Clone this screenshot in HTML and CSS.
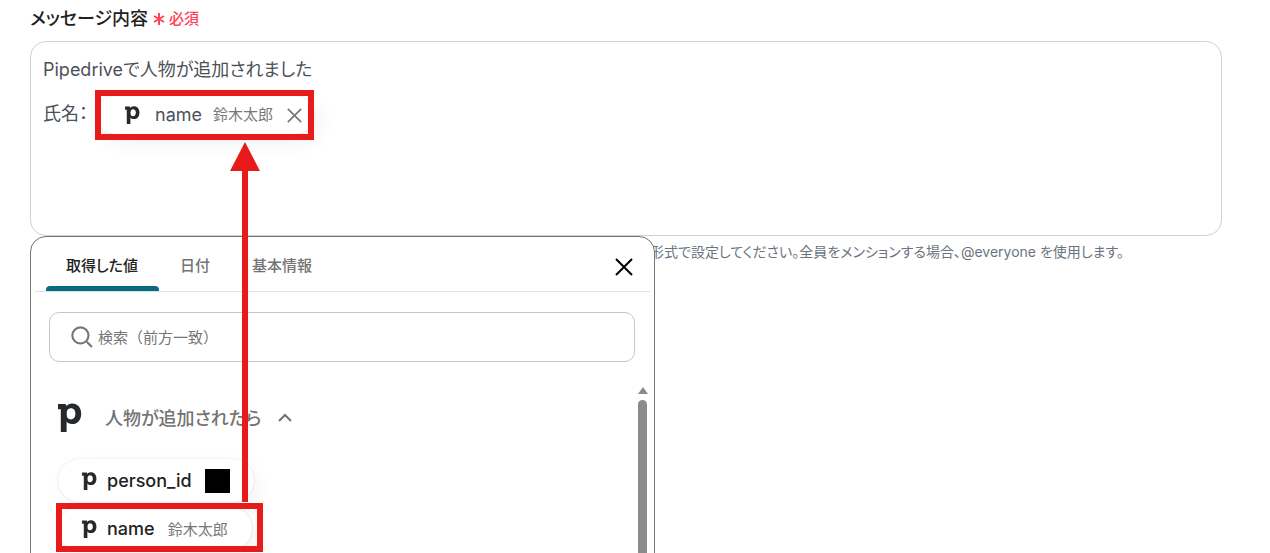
FILE: index.html
```html
<!DOCTYPE html>
<html lang="ja">
<head>
<meta charset="utf-8">
<title>メッセージ内容</title>
<link rel="stylesheet" href="styles.css">
</head>
<body>
<svg class="defs" aria-hidden="true">
  <symbol id="logo" viewBox="0 0 24 29">
    <path d="M0 1h7.5L8.6 3v26H2.8V6.2H0z" fill="#26292c"/>
    <path d="M14.3 .4c5.3 0 8.9 4.2 8.9 10.3s-3.7 10.4-9 10.4c-3.2 0-5.2-1.400-6.200-3V3.600C9 1.800 11.100.4 14.300.4zM13 5.300c-2.700 0-4.600 2.100-4.600 5.500 0 3.900 2 5.600 4.500 5.600 2.400 0 4.500-1.900 4.500-5.600 0-3.300-1.700-5.500-4.400-5.500z" fill="#26292c" fill-rule="evenodd"/>
  </symbol>
  <symbol id="cross" viewBox="0 0 18 18">
    <path d="M1 1l16 16M17 1L1 17" fill="none" stroke="currentColor" stroke-width="2"/>
  </symbol>
</svg>
<main class="page">
  <div class="label-row">
    <span class="label" id="message-label">メッセージ内容</span>
    <span class="required"><svg class="star" viewBox="0 0 12 12"><path d="M6 0v12M1 3l10 6M11 3L1 9" stroke="currentColor" stroke-width="2"/></svg>必須</span>
  </div>
  <div class="field">
    <div class="editor" role="textbox" aria-multiline="true" aria-labelledby="message-label" contenteditable="true" spellcheck="false">
      <p class="line">Pipedriveで人物が追加されました</p>
      <div class="line token-line">
        <span>氏名：</span>
        <span class="token" contenteditable="false">
          <svg class="logo-small"><use href="#logo"/></svg>
          <span class="token-name">name</span>
          <span class="sample">鈴木太郎</span>
          <button class="remove" type="button" aria-label="削除"><svg><use href="#cross"/></svg></button>
        </span>
      </div>
    </div>
    <p class="help">形式で設定してください。全員をメンションする場合、@everyone を使用します。</p>
    <section class="popup">
      <header class="tabs">
        <button class="tab selected" type="button">取得した値</button>
        <button class="tab" type="button">日付</button>
        <button class="tab" type="button">基本情報</button>
        <button class="close" type="button" aria-label="閉じる"><svg><use href="#cross"/></svg></button>
      </header>
      <label class="search">
        <svg viewBox="0 0 21 21"><circle cx="9" cy="9" r="7.7"/><path d="M15 15l5 5"/></svg>
        <input type="text" placeholder="検索（前方一致）" aria-label="検索（前方一致）">
      </label>
      <div class="results">
        <button class="group" type="button">
          <svg class="logo-large"><use href="#logo"/></svg>
          <span>人物が追加されたら</span>
          <svg class="chevron" viewBox="0 0 14 9"><path d="M1 8l6-6 6 6"/></svg>
        </button>
        <button class="value" type="button">
          <svg class="logo-small"><use href="#logo"/></svg>
          <span class="key">person_id</span>
          <span class="mask"></span>
        </button>
        <button class="value" type="button">
          <svg class="logo-small"><use href="#logo"/></svg>
          <span class="key">name</span>
          <span class="sample">鈴木太郎</span>
        </button>
        <div class="scroll"><span class="scroll-up"></span><span class="scroll-thumb"></span></div>
      </div>
    </section>
  </div>
</main>
<svg class="marks" aria-hidden="true">
  <rect x="98" y="93" width="213" height="44"/>
  <rect x="59" y="506" width="201" height="43"/>
  <path d="M245 502V168"/>
  <polygon points="245,142 230,171 260,171"/>
</svg>
</body>
</html>
```
FILE: styles.css
```css
* { box-sizing: border-box; }
html, body { height: 100%; }
body {
  margin: 0;
  overflow: hidden;
  background: #fff;
  color: #222;
  font-family: Inter, "Noto Sans CJK JP", sans-serif;
  font-feature-settings: "palt";
}
button, input { font: inherit; font-feature-settings: inherit; color: inherit; background: none; border: 0; margin: 0; padding: 0; }
p { margin: 0; }
svg { display: block; flex: none; }
.defs { position: absolute; width: 0; height: 0; }
.page { height: 100%; padding: 5px 48px 0 30px; display: flex; flex-direction: column; }
.label-row { display: flex; align-items: center; gap: 5px; height: 24px; }
.label { font-size: 18px; font-weight: 500; }
.required { display: flex; align-items: center; gap: 4px; color: #ff4458; font-size: 15px; font-weight: 500; }
.star { width: 12px; height: 12px; margin-top: 4px; }
.field { position: relative; flex: 1; margin-top: 12px; }
.editor {
  height: 195px;
  padding: 12px;
  border: 1px solid #ced0d7;
  border-radius: 16px;
  color: #4b5159;
  font-size: 18px;
  line-height: 32px;
  outline: none;
}
.token-line { display: flex; align-items: center; gap: 8px; margin-top: 8px; height: 40px; }
.token {
  display: flex;
  align-items: center;
  height: 38px;
  margin-top: 2px;
  padding: 0 12px 0 29px;
  border-radius: 20px;
  box-shadow: 0 0 2px #0002, 6px 8px 20px #00000010;
}
.logo-small { width: 15px; height: 18px; }
.token-name { margin: 0 11px 0 15px; }
.sample { color: #777; font-size: 15px; }
.remove { margin-left: 14px; color: #777; }
.remove svg { width: 15px; height: 15px; }
.help { margin: 4px 0 0 620px; color: #6b747e; font-size: 14px; line-height: 24px; white-space: nowrap; }
.popup {
  position: absolute;
  top: 195px;
  left: 0;
  bottom: -16px;
  width: 625px;
  overflow: hidden;
  border: 1px solid #747474;
  border-radius: 16px;
  background: #fff;
}
.tabs { display: flex; gap: 1px; height: 55px; margin: 0 4px; padding: 0 17px 0 11px; border-bottom: 1px solid #e2e2e5; }
.tab { padding: 5px 21px 0 20px; border-bottom: 5px solid transparent; color: #737373; font-size: 15px; font-weight: 500; }
.tab.selected { position: relative; color: #222; }
.tab.selected::after { content: ""; position: absolute; left: 0; right: 0; bottom: -5px; height: 5px; border-radius: 4px 4px 0 0; background: #066a82; }
.close { margin-left: auto; padding-top: 5px; color: #000; }
.close svg { width: 18px; height: 18px; }
.search { display: flex; align-items: center; gap: 5px; height: 50px; margin: 20px 19px 0 18px; padding: 0 21px; border: 1px solid #c7c7c7; border-radius: 10px; }
.search svg { width: 22px; height: 22px; fill: none; stroke: #757575; stroke-width: 2; }
.search input { flex: 1; outline: none; font-size: 15px; font-feature-settings: normal; }
.search input::placeholder { color: #757575; opacity: 1; }
.results { position: relative; display: flex; flex-direction: column; align-items: flex-start; padding: 30px 27px 0; }
.group { display: flex; align-items: center; height: 50px; color: #737373; font-size: 18px; font-weight: 500; }
.logo-large { width: 24px; height: 29px; }
.group span { margin: 0 17px 0 23px; }
.chevron { width: 14px; height: 9px; fill: none; stroke: #737373; stroke-width: 2; }
.value {
  display: flex;
  align-items: center;
  height: 43px;
  margin-bottom: 5px;
  padding: 0 24px;
  border-radius: 22px;
  background: #fff;
  box-shadow: 0 0 2px #0002, 6px 8px 20px #0000000c;
}
.group + .value { margin-top: 17px; }
.key { margin: 0 13px 0 10px; font-size: 18px; font-weight: 500; }
.mask { width: 25px; height: 24px; background: #000; }
.scroll { position: absolute; top: 20px; right: 4px; width: 15px; display: flex; flex-direction: column; align-items: center; gap: 6px; padding-top: 5px; }
.scroll-up { border: 5px solid transparent; border-top: 0; border-bottom: 7px solid #8b8b8b; }
.scroll-thumb { width: 9px; height: 400px; border-radius: 5px; background: #8b8b8b; }
.marks { position: absolute; top: 0; left: 0; width: 100%; height: 100%; pointer-events: none; fill: none; stroke: #e81b1b; stroke-width: 6; }
.marks polygon { fill: #e81b1b; stroke: none; }
```
